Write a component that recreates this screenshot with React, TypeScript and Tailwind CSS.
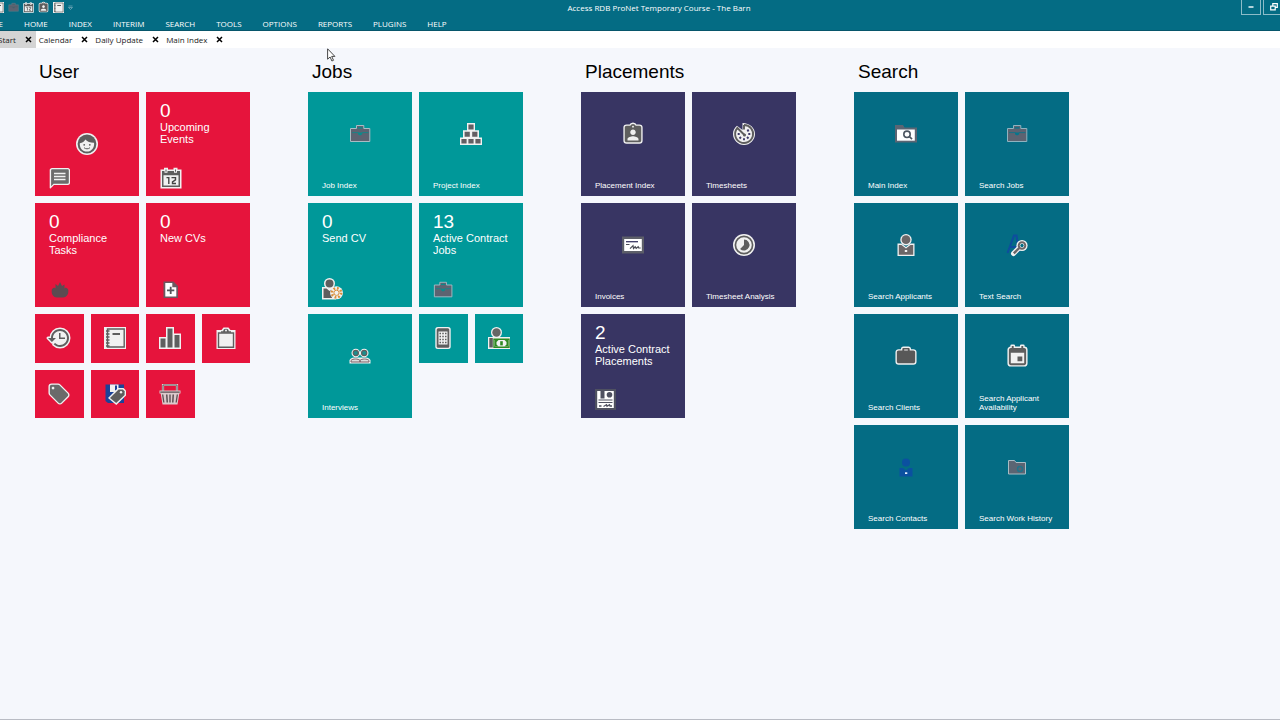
import type { ReactNode } from 'react';

const GREY = '#5e5e5e';
const PALE = '#f1f1f1';

function Svg({ size = 22, box = 22, children }: { size?: number; box?: number; children: ReactNode }) {
  return (
    <svg width={size} height={size} viewBox={`0 0 ${box} ${box}`} fill="none" aria-hidden="true" className="shrink-0 overflow-visible">
      {children}
    </svg>
  );
}

/* A 24-unit glyph with a pale halo; `back` fills the holes behind it. */
function Glyph({ d, back, size = 22, color = GREY }: { d: string; back?: ReactNode; size?: number; color?: string }) {
  return (
    <Svg size={size} box={24}>
      <path d={d} stroke={PALE} strokeWidth="3" strokeLinejoin="round" />
      {back}
      <path d={d} fill={color} />
    </Svg>
  );
}

const FaceIcon = () => (
  <Svg>
    <circle cx="11" cy="11" r="11" fill={PALE} />
    <circle cx="11" cy="11" r="9.4" fill={GREY} />
    <path d="M3.800 10.200C6.500 9.800 8.400 8.600 9.400 6.600c2.200 2.400 5 3.300 8.700 3.200.5 5-2.600 8.800-7.100 8.800S3.400 15 3.800 10.200z" fill={PALE} />
    <circle cx="8.200" cy="11.800" r=".9" fill={GREY} />
    <circle cx="13.800" cy="11.800" r=".9" fill={GREY} />
    <path d="M8 14.700c1.700 1.500 4.300 1.500 6 0" stroke={GREY} strokeWidth="1" />
  </Svg>
);

const MessageIcon = () => (
  <Svg>
    <path d="M3 1h16c1 0 2 1 2 2v13c0 1-1 2-2 2H5l-3.500 3.500C1 21.500.5 21 .7 20V3c0-1 1-2 2.300-2z" fill={PALE} />
    <path d="M3.500 2.300h15c.8 0 1.300.5 1.300 1.300v12c0 .8-.5 1.200-1.300 1.200H4.600L2.100 19.200V3.600c0-.8.600-1.300 1.400-1.300z" fill="#6b6b6b" />
    <path d="M5 6.500h11.500M5 9.500h11.500M5 12.500h11.500" stroke={PALE} strokeWidth="1.500" />
  </Svg>
);

const CalendarIcon = ({ size = 22 }: { size?: number }) => (
  <Svg size={size}>
    <path d="M.5 2.500H4V.8h4v1.700h5.500V.8h4v1.700H21.500V21.500H.5z" fill={PALE} />
    <path d="M2 4h18v16H2z" fill={GREY} />
    <path d="M3.500 8.300h15v10.200h-15zM4.500 1.500h3v4.300h-3zM14 1.500h3v4.300h-3z" fill={PALE} />
    <path d="M5.500 2.500h1v2.300h-1zM15 2.500h1v2.300h-1z" fill={GREY} />
    <path d="M6.500 10.600h2.300v6.400M11.500 10.600h4v2.200l-3 2v1.700h3.500" stroke="#444" strokeWidth="1.400" />
  </Svg>
);

const ComplianceIcon = () => (
  <Svg>
    <path d="M3 11c-1.200 4 .8 8.500 5 8.500h6c4.200 0 6.200-4.500 5-8.500l-2.200-1.500-1.300 1V6.500L13 8l-2-4-2 4-2.500-2v4.300L5 9.500z" fill="#5c4b51" />
  </Svg>
);

const NewDocIcon = () => (
  <Svg>
    <path d="M3.500 3.500h10l4.500 4.500v12H3.500z" fill="#6b5960" />
    <path d="M5.300 5h7v4.200h4v9.300h-11z" fill="#fff" />
    <path d="M10.700 8.700v7.200M7 12.300h7.300" stroke="#55565a" strokeWidth="1.800" />
  </Svg>
);

const HistoryIcon = () => (
  <Glyph
    size={24}
    back={<circle cx="13" cy="12" r="8" fill={PALE} />}
    d="M13 3c-4.970 0-9 4.030-9 9H1l3.890 3.890.07.14L9 12H6c0-3.870 3.130-7 7-7s7 3.130 7 7-3.130 7-7 7c-1.930 0-3.680-.79-4.940-2.060l-1.420 1.420C8.270 19.990 10.510 21 13 21c4.970 0 9-4.030 9-9s-4.030-9-9-9zm-1 4v6h6v-1.400h-4.500V7H12z"
  />
);

const NotebookIcon = ({ size = 22 }: { size?: number }) => (
  <Svg size={size}>
    <path d="M0 0h22v22H0z" fill={PALE} />
    <path d="M3.500 2h16.700v18H3.500z" stroke={GREY} strokeWidth="1.400" />
    <path d="M2 4h3.500M2 7h3.500M2 10h3.500M2 13h3.500M2 16h3.500M2 19h3.500" stroke={GREY} strokeWidth="1.300" />
    <path d="M8.500 6h7.500v2H8.500z" fill={GREY} />
  </Svg>
);

const ChartIcon = () => (
  <Svg>
    <path d="M0 10h7V0h8v6.500h7V22H0z" fill={PALE} />
    <path d="M1.500 11.500h5V20.500h-5zM8.500 1.500h5v19h-5zM15.500 8h5v12.500h-5z" fill={GREY} />
  </Svg>
);

const ClipboardIcon = () => (
  <Svg>
    <path d="M1.500 3H6.500L8.500.5h5L15.500 3h5v19h-19z" fill={PALE} />
    <path d="M3.500 6h15v14.300h-15z" stroke={GREY} strokeWidth="1.400" />
    <path d="M6 5.700V4.200h2.200C8.500 1 13.500 1 13.800 4.200H16v1.500z" fill={GREY} />
    <circle cx="11" cy="3.500" r="1" fill={PALE} />
  </Svg>
);

const TAG =
  'M21.410 11.580l-9-9C12.050 2.220 11.550 2 11 2H4c-1.100 0-2 .9-2 2v7c0 .55.220 1.050.590 1.420l9 9c.360.360.860.580 1.410.580.550 0 1.050-.220 1.410-.590l7-7c.370-.360.590-.860.590-1.410 0-.550-.230-1.060-.590-1.420zM5.500 7C4.670 7 4 6.330 4 5.500S4.670 4 5.500 4 7 4.670 7 5.500 6.330 7 5.500 7z';

const TagIcon = () => <Glyph d={TAG} color="#6a6a6a" back={<circle cx="5.500" cy="5.500" r="2" fill={PALE} />} />;

const SaveTagIcon = () => (
  <Svg>
    <path d="M1.500 1.500h18.500V20H4l-2.500-2z" fill="#1b4298" />
    <path d="M6 1.500h8.500V9H6z" fill={PALE} />
    <path d="M11 2.500h2v5h-2z" fill="#1b4298" />
    <path d="M14 5h5.500l2.500 2.500v5L12.300 22 4 15z" fill={PALE} />
    <path d="M14.600 6.500h4.300l1.700 1.700v3.700l-8.400 8.100L6 15z" fill={GREY} />
    <circle cx="17" cy="9.300" r="1.200" fill={PALE} />
  </Svg>
);

const BasketIcon = () => (
  <Svg>
    <path d="M4 9V2h14v7" stroke="#dcc9cc" strokeWidth="2.200" />
    <path d="M4 9V2h14v7" stroke="#6a5c60" strokeWidth="1" />
    <path d="M.5 7.500h21v3h-1.200L18.500 21.500h-15L1.700 10.500H.5z" fill="#dcc9cc" />
    <path d="M1.300 8.400h19.400v1.300H1.300zM3 11.500h1.300l1.200 8H4.200zM7 11.500h1.500l.5 8H7.500zM10.300 11.500h1.400v8h-1.400zM13.500 11.500H15l-.5 8H13zM17.700 11.500H19l-1.200 8h-1.300z" fill="#5c5054" />
  </Svg>
);

const BriefcaseIcon = ({ size = 22, accent = '#0a8a8c', edge = '#a9bcc4' }: { size?: number; accent?: string; edge?: string }) => (
  <Svg size={size}>
    <path d="M1.500 5.500h6v-3h7.300v3h6v13H1.500z" fill="#5d6371" stroke={edge} strokeWidth="1" />
    <path d="M8.800 4.200h4.700v1.300H8.800z" fill={accent} />
    <path d="M3 9.600h6.500M13 9.600h6.500" stroke={accent} strokeWidth=".8" />
    <path d="M9 9.500h4.200v1.800l-1.300 1H10.300L9 11.300z" fill={accent} />
  </Svg>
);

const BlocksIcon = () => (
  <Svg>
    <path d="M7 0h8v7.300h4v7.300h3V22H0v-7.400h3V7.300h4z" fill={PALE} />
    <path d="M8.400 1.400h5.200v5H8.400zM4.600 8.800h5.200v5H4.600zM12.200 8.800h5.200v5h-5.200zM1.400 15.900h5.200v4.700H1.400zM8.400 15.900h5.200v4.700H8.400zM15.400 15.900h5.200v4.700h-5.200z" fill="#625f63" />
  </Svg>
);

const PersonGearIcon = () => (
  <Svg>
    <path d="M0 9h5l2 2 3-2h4v12.500H0z" fill={PALE} />
    <circle cx="7.500" cy="5.500" r="5.500" fill={PALE} />
    <circle cx="7.500" cy="5.500" r="4" fill={GREY} />
    <path d="M1.500 10.500h3l3 2.500 3-2.500H12V20H1.500z" fill={GREY} />
    <circle cx="14.500" cy="14.800" r="6.500" fill={PALE} />
    <circle cx="14.500" cy="14.800" r="4.600" stroke="#d98f3c" strokeWidth="2.600" strokeDasharray="1.800 1.800" />
    <circle cx="14.500" cy="14.800" r="2.600" stroke="#d98f3c" strokeWidth="1" />
  </Svg>
);

const PeopleIcon = () => (
  <Svg>
    <path d="M.5 18.500v-3c0-1.500 2-3 5-3h11c3 0 5 1.500 5 3v3z" fill={PALE} />
    <circle cx="6.800" cy="8" r="4.300" fill={PALE} />
    <circle cx="15.200" cy="8" r="4.300" fill={PALE} />
    <circle cx="6.800" cy="8" r="2.600" fill="#1d8c8d" stroke={GREY} strokeWidth="1.200" />
    <circle cx="15.200" cy="8" r="2.600" fill="#1d8c8d" stroke={GREY} strokeWidth="1.200" />
    <path d="M2 17v-1.500c1.500-2 7.500-2 9 0V17zm9 0v-1.500c1.500-2 7.500-2 9 0V17z" fill="#ddd" stroke="#7a5f64" strokeWidth="1" />
  </Svg>
);

const PhoneIcon = () => (
  <Svg>
    <rect x="3.300" y="0" width="15.400" height="22" rx="2.500" fill={PALE} />
    <rect x="4.700" y="1.300" width="12.600" height="19.400" rx="1.500" fill={GREY} />
    <path d="M6.500 4.500h9v13h-9z" fill={PALE} />
    <path d="M7.500 6.500h7M7.500 9.500h7M7.500 12.500h7M7.500 15.500h7" stroke={GREY} strokeWidth="1.500" strokeDasharray="1.500 1.250" />
  </Svg>
);

const PersonMoneyIcon = () => (
  <Svg>
    <path d="M0 10h22v12H0z" fill={PALE} />
    <circle cx="8.500" cy="5.500" r="5.500" fill={PALE} />
    <circle cx="8.500" cy="5.500" r="4.200" fill="#666" />
    <path d="M1.300 11h3.500v9.500H1.300z" fill={GREY} />
    <path d="M6 12.300h15v8H6z" fill={PALE} stroke="#2f8a22" strokeWidth="1.400" />
    <path d="M7 13h3.500L8.500 15v2.500l2 2H7zM20 13h-3.500l2 2v2.500l-2 2H20z" fill="#2f8a22" />
    <path d="M12.200 14.200h2.600v4.200h-2.600z" fill="#2f8a22" />
  </Svg>
);

const BadgeIcon = ({ size = 22 }: { size?: number }) => (
  <Glyph
    size={size}
    back={<path d="M6 3h12v17H6z" fill={PALE} />}
    d="M19 3h-4.180C14.400 1.840 13.300 1 12 1c-1.300 0-2.400.840-2.820 2H5c-1.100 0-2 .9-2 2v14c0 1.100.9 2 2 2h14c1.100 0 2-.9 2-2V5c0-1.100-.9-2-2-2zm-7 0c.550 0 1 .450 1 1s-.450 1-1 1-1-.450-1-1 .450-1 1-1zm0 4c1.660 0 3 1.340 3 3s-1.340 3-3 3-3-1.340-3-3 1.340-3 3-3zm6 12H6v-1.400c0-2 4-3.100 6-3.100s6 1.100 6 3.100V19z"
  />
);

const TimerIcon = () => (
  <Svg>
    <path d="M9.500 0C17 0 22 5 22 11s-5 11-11 11S0 17 0 11c0-3.500 1.300-6 4-8.300L9.500 7z" fill={PALE} />
    <path d="M11 2v4.500M11 2a9 9 0 1 1-6.600 3L12 12.500" stroke={GREY} strokeWidth="1.900" />
    <circle cx="11.500" cy="12" r="1.500" fill={GREY} />
    <path d="M14.500 6.500l1 2M17.300 11h-2M15.500 15.500l-1.500-1.500M11 17.300v-2M6.500 15.500L8 14M4.700 11h2" stroke="#3c3868" strokeWidth="1.900" />
  </Svg>
);

const InvoiceIcon = () => (
  <Svg>
    <path d="M0 2.500h22v17H0z" fill="#5d5f69" />
    <path d="M2.200 5h17.600v12H2.200z" fill="#fff" />
    <path d="M4 7.700h12" stroke="#3a3764" strokeWidth="1.300" />
    <path d="M4 10.500h3.500M8 14.700l3-3 .5 2.800 1.700-1.700 1 1.500 2-1.500.5 1.200h2" stroke="#4a4b55" strokeWidth="1.200" />
  </Svg>
);

const TimelapseIcon = () => (
  <Svg>
    <circle cx="11" cy="11" r="11" fill={PALE} />
    <circle cx="11" cy="11" r="8.600" stroke={GREY} strokeWidth="1.700" />
    <path d="M11 5.500V11l-3.900 3.900A5.500 5.500 0 1 0 11 5.500z" fill={GREY} />
  </Svg>
);

const ContractIcon = () => (
  <Svg>
    <path d="M0 0h21v21H0z" fill="#4f5161" />
    <path d="M2.200 2h3.300v7.500h4V2h9.300v17H2.200z" fill="#fff" />
    <circle cx="14.500" cy="5.800" r="2.800" fill="#4f5161" />
    <path d="M3.500 11h14M3.500 13.500h14" stroke="#4f5161" strokeWidth="1.200" />
    <path d="M4 17h2.500M8.500 17.500l3-1.700.5 1.500 2.500-1.500.5 1.200h2" stroke="#4f5161" strokeWidth="1.300" />
  </Svg>
);

const FolderSearchIcon = () => (
  <Svg>
    <path d="M0 2h8l1.500 2.500H22v15H0z" fill="#5b6573" />
    <path d="M2 6.500h17.800V17.700H2z" fill="#fff" />
    <circle cx="12" cy="11.300" r="3.200" stroke="#4c5560" strokeWidth="1.600" />
    <path d="M14.300 13.500l2.700 2.700" stroke="#4c5560" strokeWidth="1.700" />
  </Svg>
);

const ApplicantIcon = () => (
  <Svg>
    <path d="M2.500 9.500h4L11 13l4.500-3.500h4V22h-17z" fill={PALE} />
    <circle cx="11" cy="5.700" r="5.700" fill={PALE} />
    <circle cx="11" cy="5.700" r="4.400" fill="#6b6667" />
    <path d="M3.800 11h2.700l4.500 3.500 4.500-3.500h2.700v9.700H3.800z" fill="#6b6667" />
    <path d="M9.800 16h2.400v2H9.800z" fill={PALE} />
  </Svg>
);

const TextSearchIcon = () => (
  <Svg>
    <path d="M1.500 19L8 1.500h2.500L13 18M4.500 13h7" stroke="#0e4d9e" strokeWidth="2" />
    <path d="M13.500 13.500L7.500 19.500" stroke={PALE} strokeWidth="5" strokeLinecap="round" />
    <circle cx="16" cy="11.500" r="5.600" fill={PALE} />
    <circle cx="16" cy="11.500" r="3.300" fill="#fff" stroke="#6b6667" strokeWidth="2" />
    <circle cx="16" cy="11.500" r="1.700" fill="#046c84" />
    <path d="M13.300 14L7.800 19.300" stroke="#6b6667" strokeWidth="2.400" />
  </Svg>
);

const ClientsIcon = () => (
  <Glyph
    d="M20 6h-4V4.500c0-.8-.5-1.300-1.300-1.300H9.300C8.500 3.200 8 3.700 8 4.500V6H4c-1.110 0-1.990.890-1.990 2L2 18c0 1.110.890 2 2 2h16c1.110 0 2-.890 2-2V8c0-1.110-.890-2-2-2zm-6 0h-4V5h4v1z"
    color="#585858"
  />
);

const EventIcon = () => (
  <Glyph
    size={23}
    back={<path d="M5 7h14v12H5z" fill={PALE} />}
    d="M17 12h-5v5h5v-5zM16 1v2H8V1H6v2H5c-1.110 0-1.990.9-1.990 2L3 19c0 1.100.890 2 2 2h14c1.100 0 2-.9 2-2V5c0-1.100-.9-2-2-2h-1V1h-2zm3 18H5V8h14v11z"
  />
);

const ContactIcon = () => (
  <Svg>
    <circle cx="11" cy="6.500" r="4" fill="#0b50a0" />
    <path d="M4.500 12h3.500l3 2.500 3-2.500h3.500v8.500h-13z" fill="#0b50a0" />
    <path d="M10 16.300h2.300v1.700H10z" fill="#e8f2ff" />
  </Svg>
);

const WorkHistoryIcon = () => (
  <Svg>
    <path d="M2.500 4.500h6L10 6.500h9.500v11.500h-17z" fill="#5b6573" stroke="#a9bcc4" strokeWidth="1" />
    <circle cx="14" cy="13" r="2.500" stroke="#23748a" strokeWidth="1.500" />
  </Svg>
);

type TileData = {
  name: string;
  icon: ReactNode;
  kind?: 'caption' | 'count' | 'small' | 'profile';
  count?: number;
  extra?: ReactNode;
};

type Group = { title: string; color: string; tiles: TileData[] };

const groups: Group[] = [
  {
    title: 'User',
    color: 'bg-[#e6143c]',
    tiles: [
      { name: 'Profile', kind: 'profile', icon: <FaceIcon />, extra: <MessageIcon /> },
      { name: 'Upcoming Events', kind: 'count', count: 0, icon: <CalendarIcon /> },
      { name: 'Compliance Tasks', kind: 'count', count: 0, icon: <ComplianceIcon /> },
      { name: 'New CVs', kind: 'count', count: 0, icon: <NewDocIcon /> },
      { name: 'History', kind: 'small', icon: <HistoryIcon /> },
      { name: 'Notebook', kind: 'small', icon: <NotebookIcon /> },
      { name: 'Statistics', kind: 'small', icon: <ChartIcon /> },
      { name: 'Clipboard', kind: 'small', icon: <ClipboardIcon /> },
      { name: 'Tags', kind: 'small', icon: <TagIcon /> },
      { name: 'Saved tags', kind: 'small', icon: <SaveTagIcon /> },
      { name: 'Basket', kind: 'small', icon: <BasketIcon /> },
    ],
  },
  {
    title: 'Jobs',
    color: 'bg-[#009899]',
    tiles: [
      { name: 'Job Index', icon: <BriefcaseIcon /> },
      { name: 'Project Index', icon: <BlocksIcon /> },
      { name: 'Send CV', kind: 'count', count: 0, icon: <PersonGearIcon /> },
      { name: 'Active Contract Jobs', kind: 'count', count: 13, icon: <BriefcaseIcon size={20} /> },
      { name: 'Interviews', icon: <PeopleIcon /> },
      { name: 'Phone', kind: 'small', icon: <PhoneIcon /> },
      { name: 'Payroll', kind: 'small', icon: <PersonMoneyIcon /> },
    ],
  },
  {
    title: 'Placements',
    color: 'bg-[#383563]',
    tiles: [
      { name: 'Placement Index', icon: <BadgeIcon /> },
      { name: 'Timesheets', icon: <TimerIcon /> },
      { name: 'Invoices', icon: <InvoiceIcon /> },
      { name: 'Timesheet Analysis', icon: <TimelapseIcon /> },
      { name: 'Active Contract Placements', kind: 'count', count: 2, icon: <ContractIcon /> },
    ],
  },
  {
    title: 'Search',
    color: 'bg-[#046c84]',
    tiles: [
      { name: 'Main Index', icon: <FolderSearchIcon /> },
      { name: 'Search Jobs', icon: <BriefcaseIcon accent="#06758c" edge="#8fb3c0" /> },
      { name: 'Search Applicants', icon: <ApplicantIcon /> },
      { name: 'Text Search', icon: <TextSearchIcon /> },
      { name: 'Search Clients', icon: <ClientsIcon /> },
      { name: 'Search Applicant Availability', icon: <EventIcon /> },
      { name: 'Search Contacts', icon: <ContactIcon /> },
      { name: 'Search Work History', icon: <WorkHistoryIcon /> },
    ],
  },
];

function Tile({ tile, color }: { tile: TileData; color: string }) {
  const kind = tile.kind ?? 'caption';
  if (kind === 'small') {
    return (
      <button type="button" aria-label={tile.name} className={`flex aspect-square items-center justify-center ${color}`}>
        {tile.icon}
      </button>
    );
  }
  const big = `col-span-2 row-span-2 flex aspect-square flex-col px-3.5 text-left text-white ${color}`;
  if (kind === 'count') {
    return (
      <button type="button" className={`${big} pt-2 pb-[7px]`}>
        <span className="text-[19px] leading-[21px]">{tile.count}</span>
        <span className="text-[11px] leading-3">{tile.name}</span>
        <span className="mt-auto">{tile.icon}</span>
      </button>
    );
  }
  if (kind === 'profile') {
    return (
      <button type="button" aria-label={tile.name} className={`${big} pt-[41px] pb-[7px]`}>
        <span className="self-center">{tile.icon}</span>
        <span className="mt-auto">{tile.extra}</span>
      </button>
    );
  }
  return (
    <button type="button" className={`${big} pt-[31px] pb-1.5`}>
      <span className="self-center">{tile.icon}</span>
      <span className="mt-auto text-[8px] leading-[9px]">{tile.name}</span>
    </button>
  );
}

const menu = ['FILE', 'HOME', 'INDEX', 'INTERIM', 'SEARCH', 'TOOLS', 'OPTIONS', 'REPORTS', 'PLUGINS', 'HELP'];
const tabs = ['Start', 'Calendar', 'Daily Update', 'Main Index'];

export default function App() {
  return (
    <div className="flex min-h-screen flex-col overflow-hidden border-b border-[#b9bcc4] bg-[#f5f7fc] font-['Liberation_Sans',sans-serif] text-black">
      <header className="border-b border-[#07566b] bg-[#046c84] font-['Open_Sans',sans-serif] text-white">
        <div className="flex h-4 items-start">
          <div className="-ml-[7px] flex items-center gap-1 pt-0.5">
            <button type="button" aria-label="Mail"><NotebookIcon size={11} /></button>
            <button type="button" aria-label="Jobs"><BriefcaseIcon size={11} edge="#5d7f8a" accent="#46606b" /></button>
            <button type="button" aria-label="Calendar"><CalendarIcon size={11} /></button>
            <button type="button" aria-label="Applicants"><BadgeIcon size={11} /></button>
            <button type="button" aria-label="Notebook"><NotebookIcon size={11} /></button>
            <button type="button" aria-label="Customise toolbar">
              <Svg size={5} box={5}><path d="M.5 1h4M.5 2.500h4L2.500 4.500z" stroke="#7fb0be" strokeWidth=".7" /></Svg>
            </button>
          </div>
          <h1 className="flex-1 pl-1 text-center text-[8px] leading-4">Access RDB ProNet Temporary Course - The Barn</h1>
          <div className="flex gap-0.5 overflow-hidden">
            <button type="button" aria-label="Minimise" className="flex h-[15px] w-5 items-center justify-center border border-t-0 border-[#8dbcc8]">
              <Svg size={6} box={6}><path d="M.5 3h5" stroke="#fff" strokeWidth="1.400" /></Svg>
            </button>
            <button type="button" aria-label="Restore" className="-mr-1 flex h-[15px] w-[21px] items-center justify-center border border-t-0 border-[#8dbcc8]">
              <Svg size={8} box={8}><path d="M2.800 3V.7h4.500v3.600H5.500M.7 3.200h4.500v3.600H.7z" stroke="#fff" strokeWidth="1.200" /></Svg>
            </button>
          </div>
        </div>
        <nav className="-ml-3 flex h-3.5 gap-[21px]">
          {menu.map((item) => (
            <button key={item} type="button" className="text-[8px] leading-[15px]">{item}</button>
          ))}
        </nav>
      </header>

      <div className="flex h-[17px] bg-white font-['Open_Sans',sans-serif] text-[#222]">
        {tabs.map((tab, i) => (
          <div key={tab} className={i === 0 ? '-ml-1 flex items-center gap-[9px] bg-[#d4d4d4] pr-1 pl-0.5' : 'flex items-center gap-[9px] pr-1 pl-[3px]'}>
            <button type="button" className="text-[8px] leading-[19px]">{tab}</button>
            <button type="button" aria-label={`Close ${tab}`}>
              <Svg size={7} box={7}><path d="M1 1l5 5M6 1L1 6" stroke="#000" strokeWidth="1.500" /></Svg>
            </button>
          </div>
        ))}
      </div>

      <main className="flex items-start gap-[58px] px-[35px] pt-[13px]">
        {groups.map((group) => (
          <section key={group.title} className="w-[215px] shrink-0">
            <h2 className="mb-[9px] pl-1 text-[19px] leading-[22px]">{group.title}</h2>
            <div className="grid grid-cols-4 gap-[7px]">
              {group.tiles.map((tile) => (
                <Tile key={tile.name} tile={tile} color={group.color} />
              ))}
            </div>
          </section>
        ))}
      </main>

      <div className="pointer-events-none absolute top-12 left-[327px]">
        <svg width="9" height="14" viewBox="0 0 9 14" aria-hidden="true">
          <path d="M.6.800v10.400l2.500-2.200 1.800 4 1.600-.7-1.800-3.900h3.200z" fill="#fff" stroke="#333" strokeWidth=".9" />
        </svg>
      </div>
    </div>
  );
}
